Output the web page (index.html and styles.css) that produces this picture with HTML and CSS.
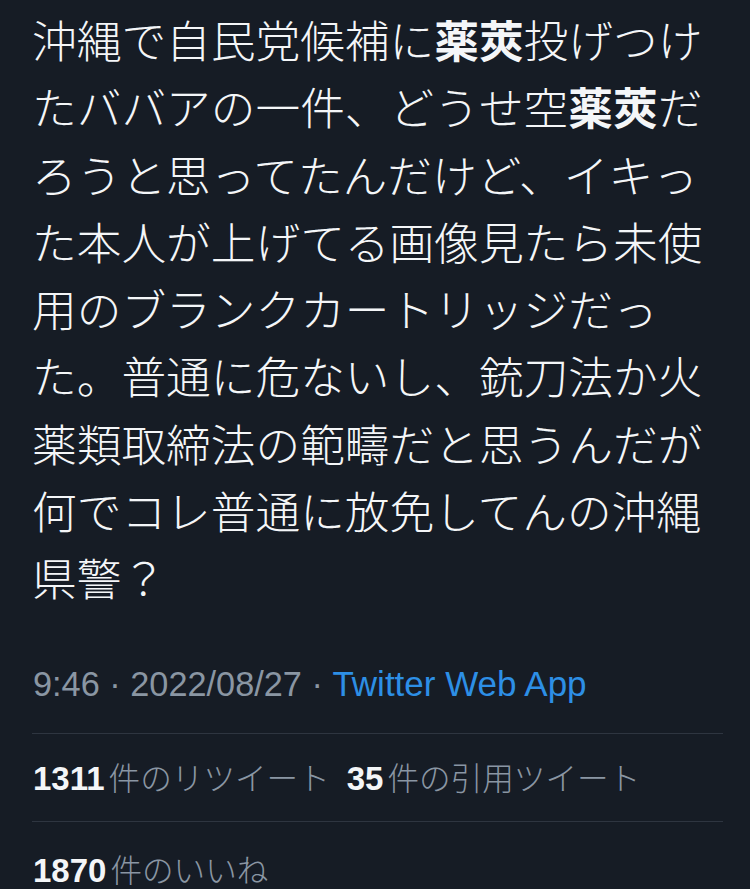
FILE: index.html
```html
<!DOCTYPE html>
<html lang="ja">
<head>
<meta charset="utf-8">
<link rel="stylesheet" href="styles.css">
</head>
<body>
<div class="tweet">
  <p class="text">沖縄で自民党候補に<b>薬莢</b>投げつけたババアの一件、どうせ空<b>薬莢</b>だろうと思ってたんだけど、イキった本人が上げてる画像見たら未使用のブランクカートリッジだった。普通に危ないし、銃刀法か火薬類取締法の範疇だと思うんだが何でコレ普通に放免してんの沖縄県警？</p>
  <div class="meta"><span class="time">9:46 · 2022/08/27 · </span><span class="source">Twitter Web App</span></div>
  <div class="stats">
    <span class="stat"><b class="num">1311</b><span class="label">件のリツイート</span></span>
    <span class="stat"><b class="num">35</b><span class="label">件の引用ツイート</span></span>
  </div>
  <div class="stats likes">
    <span class="stat"><b class="num">1870</b><span class="label">件のいいね</span></span>
  </div>
</div>
</body>
</html>
```
FILE: styles.css
```css
html, body {
  margin: 0;
  padding: 0;
  background: #161c25;
}
body {
  width: 750px;
  height: 889px;
  overflow: hidden;
}
.tweet {
  padding: 5px 30px 0 32px;
}
.text {
  margin: 0;
  font-family: "Noto Sans CJK JP", sans-serif;
  font-weight: 300;
  font-size: 44.7px;
  line-height: 67.25px;
  color: #f4f6f8;
  line-break: strict;
}
.text b {
  font-weight: 700;
}
.meta {
  margin-top: 41px;
  height: 66px;
  line-height: 66px;
  font-family: "Liberation Sans", "Noto Sans CJK JP", sans-serif;
  font-size: 34.3px;
  color: #8a96a3;
  padding-left: 1px;
  margin-right: -3px;
  border-bottom: 1px solid #2e3540;
  padding-bottom: 16px;
}
.source {
  font-size: 35px;
  color: #2d8fe6;
}
.stats {
  display: flex;
  gap: 17px;
  height: 83px;
  padding-bottom: 4px;
  align-items: center;
  border-bottom: 1px solid #2e3540;
  margin-right: -3px;
  padding-left: 1px;
}
.likes {
  border-bottom: none;
  height: 92px;
}
.stat {
  display: flex;
  align-items: baseline;
  font-size: 32px;
}
.num {
  font-family: "Liberation Sans", sans-serif;
  font-weight: 700;
  font-size: 33px;
  color: #f4f6f8;
}
.label {
  margin-left: 4px;
  font-family: "Noto Sans CJK JP", sans-serif;
  font-weight: 300;
  font-size: 31.6px;
  color: #8a96a3;
}
```
